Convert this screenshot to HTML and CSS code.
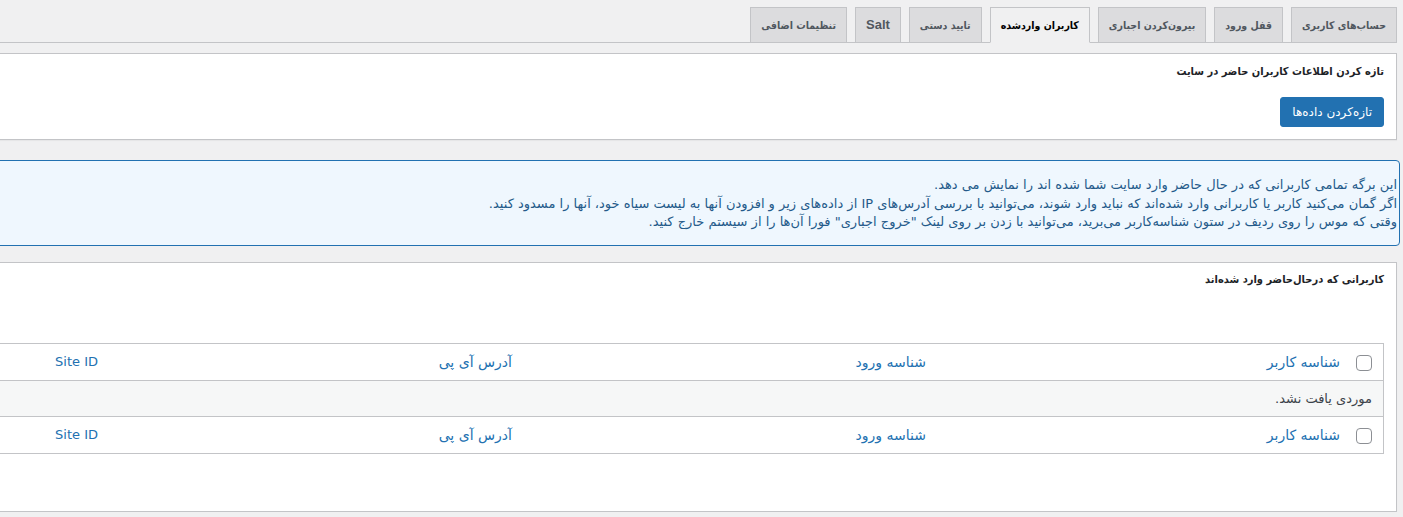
FILE: index.html
```html
<!DOCTYPE html>
<html dir="rtl" lang="fa">
<head>
<meta charset="utf-8">
<title>کاربران واردشده</title>
<link rel="stylesheet" href="styles.css">
</head>
<body>
<div class="wrap">
  <nav class="tabs">
    <a class="tab" href="#">حساب‌های کاربری</a>
    <a class="tab" href="#">قفل ورود</a>
    <a class="tab" href="#">بیرون‌کردن اجباری</a>
    <a class="tab active" href="#">کاربران واردشده</a>
    <a class="tab" href="#">تایید دستی</a>
    <a class="tab tab-latin" href="#">Salt</a>
    <a class="tab" href="#">تنظیمات اضافی</a>
  </nav>

  <div class="panel panel-refresh">
    <h2 class="panel-title">تازه کردن اطلاعات کاربران حاضر در سایت</h2>
    <div class="actions">
      <button class="btn" type="button">تازه‌کردن داده‌ها</button>
    </div>
  </div>

  <div class="notice">
    <p>این برگه تمامی کاربرانی که در حال حاضر وارد سایت شما شده اند را نمایش می دهد.<br>اگر گمان می‌کنید کاربر یا کاربرانی وارد شده‌اند که نباید وارد شوند، می‌توانید با بررسی آدرس‌های IP از داده‌های زیر و افزودن آنها به لیست سیاه خود، آنها را مسدود کنید.<br>وقتی که موس را روی ردیف در ستون شناسه‌کاربر می‌برید، می‌توانید با زدن بر روی لینک "خروج اجباری" فورا آن‌ها را از سیستم خارج کنید.</p>
  </div>

  <div class="panel panel-users">
    <h2 class="panel-title">کاربرانی که درحال‌حاضر وارد شده‌اند</h2>
    <table class="list">
      <colgroup>
        <col class="c-check"><col class="c-col"><col class="c-col"><col class="c-col"><col>
      </colgroup>
      <thead>
        <tr>
          <th class="check"><span class="cb"></span></th>
          <th><a href="#">شناسه کاربر</a></th>
          <th><a href="#">شناسه ورود</a></th>
          <th><a href="#">آدرس آی پی</a></th>
          <th><a class="latin" href="#">Site ID</a></th>
        </tr>
      </thead>
      <tbody>
        <tr class="empty">
          <td colspan="5">موردی یافت نشد.</td>
        </tr>
      </tbody>
      <tfoot>
        <tr>
          <th class="check"><span class="cb"></span></th>
          <th><a href="#">شناسه کاربر</a></th>
          <th><a href="#">شناسه ورود</a></th>
          <th><a href="#">آدرس آی پی</a></th>
          <th><a class="latin" href="#">Site ID</a></th>
        </tr>
      </tfoot>
    </table>
  </div>
</div>
</body>
</html>
```

FILE: styles.css
```css
html, body {
  overflow: hidden;
}

body {
  margin: 0;
  background: #f0f0f1;
  font-family: "DejaVu Sans", sans-serif;
  font-size: 13px;
  color: #3c434a;
}

.wrap {
  width: 1720px;
  margin-right: 6px;
}

/* tabs */
.tabs {
  display: flex;
  gap: 8px;
  padding-top: 7px;
  border-bottom: 1px solid #c3c4c7;
}

.tab {
  box-sizing: border-box;
  height: 36px;
  margin-bottom: -1px;
  padding: 0 10px;
  border: 1px solid #c3c4c7;
  background: #dcdcde;
  color: #50575e;
  font-family: "DejaVu Sans Condensed", "DejaVu Sans", sans-serif;
  font-size: 10.5px;
  font-weight: bold;
  line-height: 34px;
  text-decoration: none;
  white-space: nowrap;
}

.tab-latin {
  font-family: "Liberation Sans", sans-serif;
  font-size: 13px;
}

.tab.active {
  background: #f0f0f1;
  border-bottom-color: #f0f0f1;
  color: #000;
}

/* panels */
.panel {
  background: #fff;
  border: 1px solid #c3c4c7;
  box-shadow: 0 1px 1px rgba(0, 0, 0, 0.04);
}

.panel-refresh {
  margin-top: 10px;
  padding: 9px 12px 12px;
}

.panel-title {
  height: 18px;
  margin: 0;
  font-family: "DejaVu Sans Condensed", "DejaVu Sans", sans-serif;
  font-size: 11px;
  font-weight: bold;
  line-height: 18px;
  color: #1d2327;
}

.actions {
  margin-top: 16px;
}

.btn {
  height: 30px;
  padding: 0 11px;
  border: 1px solid #2271b1;
  border-radius: 3px;
  background: #2271b1;
  color: #fff;
  font-family: "DejaVu Sans", sans-serif;
  font-size: 12px;
  line-height: 28px;
}

/* notice */
.notice {
  margin-top: 20px;
  margin-right: -3px;
  padding: 15px 2px 13px;
  border: 1px solid #2271b1;
  border-radius: 4px;
  background: #eff7fe;
}

.notice p {
  margin: 0;
  font-size: 13px;
  line-height: 18.5px;
  color: #245a8a;
  white-space: nowrap;
}

/* users */
.panel-users {
  margin-top: 16px;
  padding: 8px 12px 57px;
}

.list {
  width: 100%;
  margin-top: 54px;
  table-layout: fixed;
  border: 1px solid #c3c4c7;
  border-spacing: 0;
  background: #fff;
}

.c-check {
  width: 33px;
}

.c-col {
  width: 414px;
}

.list th {
  height: 37px;
  box-sizing: border-box;
  padding: 8px 10px;
  font-size: 14px;
  font-weight: normal;
  line-height: 18px;
  text-align: right;
}

.list thead th {
  border-bottom: 1px solid #c3c4c7;
}

.list tfoot th {
  border-top: 1px solid #c3c4c7;
}

.list th a {
  color: #2271b1;
  text-decoration: none;
}

.list th a.latin {
  font-size: 13px;
}

.list th.check {
  padding: 0 11px 0 0;
  vertical-align: middle;
}

.cb {
  display: block;
  width: 16px;
  height: 16px;
  box-sizing: border-box;
  margin-top: 2px;
  border: 1px solid #8c8f94;
  border-radius: 4px;
  background: #fff;
}

.empty td {
  height: 35px;
  box-sizing: border-box;
  padding: 8px 11px;
  background: #f6f7f7;
  font-size: 13px;
  line-height: 17px;
  color: #3c434a;
}
```
